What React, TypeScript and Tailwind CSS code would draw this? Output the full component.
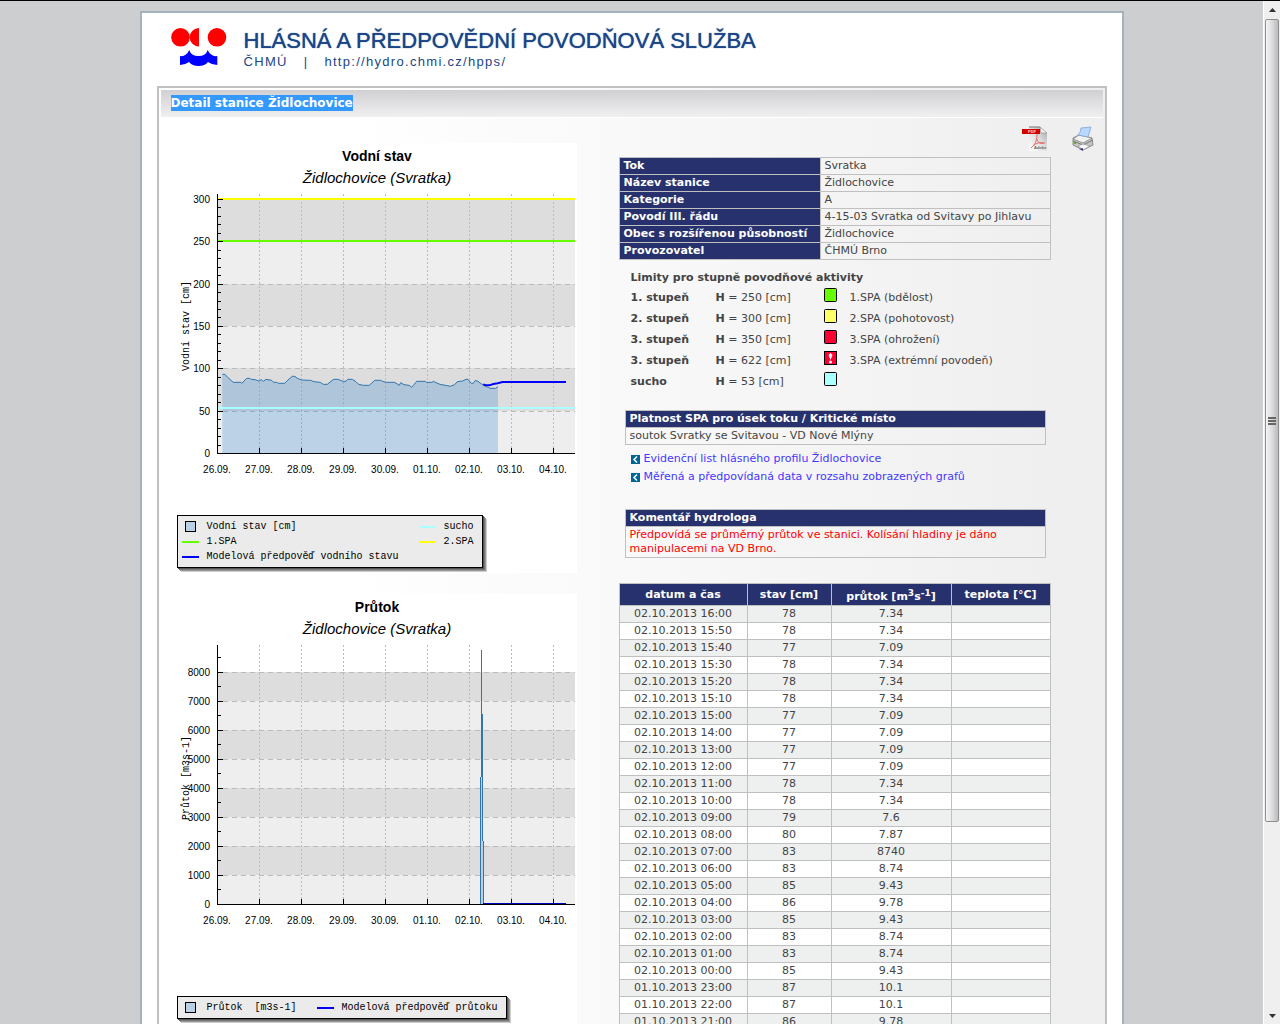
import React from "react";

const stationInfo = [
  ["Tok", "Svratka"],
  ["Název stanice", "Židlochovice"],
  ["Kategorie", "A"],
  ["Povodí III. řádu", "4-15-03 Svratka od Svitavy po Jihlavu"],
  ["Obec s rozšířenou působností", "Židlochovice"],
  ["Provozovatel", "ČHMÚ Brno"],
];

const limits = [
  { name: "1. stupeň", h: "250", color: "#66ff00", label: "1.SPA (bdělost)" },
  { name: "2. stupeň", h: "300", color: "#ffff66", label: "2.SPA (pohotovost)" },
  { name: "3. stupeň", h: "350", color: "#ff0033", label: "3.SPA (ohrožení)" },
  { name: "3. stupeň", h: "622", color: "#ff0033", label: "3.SPA (extrémní povodeň)", extreme: true },
  { name: "sucho", h: "53", color: "#aaffff", label: "" },
];

const measurements = [
  ["02.10.2013 16:00", "78", "7.34"],
  ["02.10.2013 15:50", "78", "7.34"],
  ["02.10.2013 15:40", "77", "7.09"],
  ["02.10.2013 15:30", "78", "7.34"],
  ["02.10.2013 15:20", "78", "7.34"],
  ["02.10.2013 15:10", "78", "7.34"],
  ["02.10.2013 15:00", "77", "7.09"],
  ["02.10.2013 14:00", "77", "7.09"],
  ["02.10.2013 13:00", "77", "7.09"],
  ["02.10.2013 12:00", "77", "7.09"],
  ["02.10.2013 11:00", "78", "7.34"],
  ["02.10.2013 10:00", "78", "7.34"],
  ["02.10.2013 09:00", "79", "7.6"],
  ["02.10.2013 08:00", "80", "7.87"],
  ["02.10.2013 07:00", "83", "8740"],
  ["02.10.2013 06:00", "83", "8.74"],
  ["02.10.2013 05:00", "85", "9.43"],
  ["02.10.2013 04:00", "86", "9.78"],
  ["02.10.2013 03:00", "85", "9.43"],
  ["02.10.2013 02:00", "83", "8.74"],
  ["02.10.2013 01:00", "83", "8.74"],
  ["02.10.2013 00:00", "85", "9.43"],
  ["01.10.2013 23:00", "87", "10.1"],
  ["01.10.2013 22:00", "87", "10.1"],
  ["01.10.2013 21:00", "86", "9.78"],
];

const days = ["26.09.", "27.09.", "28.09.", "29.09.", "30.09.", "01.10.", "02.10.", "03.10.", "04.10."];

const levelLine =
  "187,73 195,73 203,82 212,90 220,97 243,97 246,100 252,93 260,85 270,85 273,88 285,89 297,93 304,89 310,94 318,88 335,91 341,97 350,97 356,100 374,100 384,90 397,79 405,79 412,85 420,88 425,90 452,91 462,95 481,97 490,103 502,103 513,94 521,88 535,88 541,91 550,94 558,94 563,88 577,88 588,95 596,103 610,106 628,106 644,91 662,91 668,94 680,97 704,97 718,106 722,98 732,104 748,106 755,112 762,104 770,94 796,94 800,97 816,97 820,94 828,98 840,103 862,107 871,109 884,104 892,95 908,93 918,88 924,88 934,100 940,100 946,91 954,94 962,100 970,105 976,109 985,112 990,115 1007,115 1014,110";

type Tick = { label: string; y: number };

const levelTicks: Tick[] = [
  { label: "300", y: 56 },
  { label: "250", y: 98 },
  { label: "200", y: 141 },
  { label: "150", y: 183 },
  { label: "100", y: 225 },
  { label: "50", y: 268 },
  { label: "0", y: 310 },
];

const flowTicks: Tick[] = [8000, 7000, 6000, 5000, 4000, 3000, 2000, 1000, 0].map((v) => ({
  label: String(v),
  y: 310 - (v / 1000) * 29,
}));

function ChartFrame(props: {
  title: string;
  axis: string;
  axisStart: number;
  ticks: Tick[];
  minors: number[];
  height: number;
  children: React.ReactNode;
}) {
  const { title, axis, axisStart, ticks, minors, height, children } = props;
  return (
    <svg width="400" height={height} className="block font-['Liberation_Sans']" role="img" aria-label={title}>
      <text x="200" y="18" textAnchor="middle" className="text-[14px] font-bold">{title}</text>
      <text x="200" y="40" textAnchor="middle" className="text-[15px] italic">Židlochovice (Svratka)</text>
      <g shapeRendering="crispEdges">
        {ticks.slice(0, -1).map((t, i) => (
          <rect key={t.y} x="41" y={t.y} width="357" height={ticks[i + 1].y - t.y} fill={i % 2 ? "#eeeeee" : "#dddddd"} />
        ))}
        {ticks.slice(0, -1).map((t) => (
          <line key={t.y} x1="46" x2="398" y1={t.y + 0.5} y2={t.y + 0.5} stroke="#bbbbbb" strokeDasharray="5 4" />
        ))}
        {days.slice(1).map((d, i) => (
          <line key={d} x1={82.5 + i * 42} x2={82.5 + i * 42} y1="51" y2="310" stroke="#bbbbbb" strokeDasharray="2 2" />
        ))}
      </g>
      {children}
      <g shapeRendering="crispEdges" stroke="#000">
        <line x1="40.5" x2="40.5" y1="51" y2="311" />
        <line x1="40" x2="398" y1="310.5" y2="310.5" />
        {ticks.map((t) => (
          <line key={t.y} x1="41" x2="46" y1={t.y + 0.5} y2={t.y + 0.5} />
        ))}
        {minors.map((y) => (
          <line key={y} x1="41" x2="44" y1={y} y2={y} />
        ))}
        {days.slice(1).map((d, i) => (
          <line key={d} x1={82.5 + i * 42} x2={82.5 + i * 42} y1="305" y2="310" />
        ))}
      </g>
      {ticks.map((t) => (
        <text key={t.y} x="33" y={t.y + 4} textAnchor="end" className="text-[10px]">{t.label}</text>
      ))}
      {days.map((d, i) => (
        <text key={d} x={40 + i * 42} y="330" textAnchor="middle" className="text-[10px]">{d}</text>
      ))}
      <text transform={`translate(12 ${axisStart}) rotate(-90)`} className="font-['Liberation_Mono'] text-[10px]">{axis}</text>
    </svg>
  );
}

function LegendItem({ color, box, children }: { color: string; box?: boolean; children: React.ReactNode }) {
  return (
    <span className="flex items-center gap-2 whitespace-pre">
      <span className="flex w-[17px] justify-center">
        {box ? (
          <span className="size-[11px] border border-black" style={{ backgroundColor: color }} />
        ) : (
          <span className="h-[2px] w-full" style={{ backgroundColor: color }} />
        )}
      </span>
      {children}
    </span>
  );
}

const legendBox =
  "border border-black bg-[#ebebeb] font-['Liberation_Mono'] text-[10px] leading-[15px] text-black shadow-[1px_1px_0_#555,2px_2px_0_#777,3px_3px_0_#999,4px_4px_0_#ccc]";

function LevelChart() {
  const minors: number[] = [];
  for (let v = 10; v < 300; v += 10) if (v % 50) minors.push(Math.round(310 - v * 0.847) + 0.5);
  return (
    <figure className="bg-white pb-[5px]">
      <ChartFrame title="Vodní stav" axis="Vodní stav [cm]" axisStart={228} ticks={levelTicks} minors={minors} height={372}>
        <g transform="translate(-17 207) scale(0.3333)" fill="none">
          <polygon points={`187,310 ${levelLine} 1014,310`} fill="#2581d5" fillOpacity="0.25" />
          <polyline points={levelLine} stroke="#3274ac" strokeWidth="3" />
          <polyline points="970,103 975,105 988,106 1000,102 1013,100 1028,96 1218,96" stroke="#0000ff" strokeWidth="6" />
        </g>
        <rect x="41" y="55" width="357" height="2" fill="#ffff00" />
        <rect x="41" y="97" width="357" height="2" fill="#66ff00" />
        <rect x="41" y="264" width="357" height="2" fill="#aaffff" />
      </ChartFrame>
      <figcaption className={`${legendBox} grid w-[306px] grid-cols-[237px_1fr] px-1 py-[3px]`}>
        <LegendItem color="#bad1e5" box>Vodní stav [cm]</LegendItem>
        <LegendItem color="#aaffff">sucho</LegendItem>
        <LegendItem color="#66ff00">1.SPA</LegendItem>
        <LegendItem color="#ffff00">2.SPA</LegendItem>
        <LegendItem color="#0000ff">Modelová předpověď vodního stavu</LegendItem>
      </figcaption>
    </figure>
  );
}

function FlowChart() {
  const minors = [8500, 7500, 6500, 5500, 4500, 3500, 2500, 1500, 500].map((v) => Math.floor(310 - (v / 1000) * 29) + 0.5);
  return (
    <figure className="bg-white pb-[5px]">
      <ChartFrame title="Průtok" axis="Průtok [m3s-1]" axisStart={226} ticks={flowTicks} minors={minors} height={402}>
        <g shapeRendering="crispEdges">
          <rect x="304" y="183" width="2" height="127" fill="#bad1e5" />
          <rect x="303" y="183" width="1" height="127" fill="#3274ac" />
          <rect x="304" y="56" width="1" height="127" fill="#3274ac" />
          <rect x="305" y="120" width="1" height="127" fill="#3274ac" />
          <rect x="306" y="247" width="1" height="63" fill="#3274ac" />
          <rect x="306" y="309" width="83" height="1" fill="#0000bb" />
        </g>
      </ChartFrame>
      <figcaption className={`${legendBox} flex w-[330px] gap-5 px-1 py-[3px]`}>
        <LegendItem color="#bad1e5" box>{"Průtok  [m3s-1]"}</LegendItem>
        <LegendItem color="#0000ff">Modelová předpověď průtoku</LegendItem>
      </figcaption>
    </figure>
  );
}

function Logo() {
  return (
    <svg width="56" height="40" viewBox="0 0 56 40" aria-hidden="true">
      <g fill="#ff0000">
        <circle cx="9.5" cy="10.3" r="9.3" />
        <path d="M28 1A9.3 9.3 0 0 0 28 19.6Z" />
        <circle cx="46" cy="10.3" r="9.3" />
      </g>
      <path
        d="M9 29Q15 30 18.3 23Q20 29 27.5 29Q35 29 36.7 23Q40 30 46.3 29V38Q41 38 37 35Q34 39 27.5 39Q21 39 18 35Q14 38 9 38Z"
        fill="#0000ff"
      />
    </svg>
  );
}

function PdfIcon() {
  return (
    <svg width="25" height="26" viewBox="0 0 25 26" aria-hidden="true">
      <defs>
        <linearGradient id="sheet" x1="1" y1="0" x2="0" y2="1">
          <stop offset="0" stopColor="#a5a5a5" />
          <stop offset="0.45" stopColor="#dcdcdc" />
          <stop offset="1" stopColor="#ffffff" />
        </linearGradient>
      </defs>
      <path d="M7 1H18L25 7V25H7Z" fill="url(#sheet)" />
      <path d="M18 1L25 7L19 7Z" fill="#f2f2f2" stroke="#8a8a8a" strokeWidth="0.6" />
      <path d="M7 1H18" stroke="#777" />
      <rect x="0" y="3" width="18" height="5" fill="#d40000" />
      <text x="6" y="7" className="font-['Liberation_Sans'] text-[4px] font-bold" fill="#ffd5d5">PDF</text>
      <path d="M15 8C15 13 14 18 9 22M15 13C16 17 19 18 23 17M11 20C14 17 18 16 22 17" fill="none" stroke="#e06666" />
      <text x="12" y="23" className="font-['Liberation_Sans'] text-[4px] font-bold" fill="#666">Adobe</text>
    </svg>
  );
}

function PrinterIcon() {
  return (
    <svg width="24" height="26" viewBox="0 0 24 26" aria-hidden="true">
      <path d="M2 12L8 9L21 12L22 19L12 24L2 19Z" fill="#c5c5c5" stroke="#777" strokeWidth="0.8" />
      <path d="M2 13L8 9L21 12L12 17Z" fill="#f1f1f1" stroke="#888" strokeWidth="0.8" />
      <path d="M10 2L20 1L17 11L7 9Q10 6 10 2Z" fill="#b9d8ff" stroke="#7da3d4" strokeWidth="0.8" />
      <path d="M2 15L12 19L22 14" fill="none" stroke="#777" />
      <path d="M7 20L12 18L19 20L12 24Z" fill="#f8f8f8" stroke="#888" strokeWidth="0.6" />
      <path d="M8 23L12 25L12 22Z" fill="#40407a" />
      <rect x="3" y="16" width="2" height="2" fill="#5cb32a" />
    </svg>
  );
}

function LinkMark() {
  return (
    <svg width="9" height="9" viewBox="0 0 9 9" aria-hidden="true">
      <rect width="9" height="9" fill="#006699" />
      <path d="M6 1.5L3 4.5L6 7.5" fill="none" stroke="#fff" strokeWidth="1.5" />
    </svg>
  );
}

function Swatch({ color, extreme }: { color: string; extreme?: boolean }) {
  return (
    <svg width="13" height="14" viewBox="0 0 13 14" className="block" aria-hidden="true">
      <rect x="0.5" y="0.5" width="12" height="13" rx={extreme ? 0 : 1} fill={color} stroke="#000" />
      {extreme && <path d="M6.5 2L8.5 4L6.5 9L4.5 4ZM5 11A1.5 1.5 0 1 1 8 11A1.5 1.5 0 1 1 5 11Z" fill="#fff" />}
    </svg>
  );
}

const headCell = "border border-[#c0c0c0] bg-[#26316d] px-1 text-white";

function NoteTable({ title, children, red }: { title: string; children: React.ReactNode; red?: boolean }) {
  return (
    <table className="ml-[6px] w-[421px] border-collapse">
      <thead>
        <tr>
          <th className={`${headCell} py-px text-left`}>{title}</th>
        </tr>
      </thead>
      <tbody>
        <tr>
          <td className={`border border-[#c0c0c0] px-1 py-px ${red ? "text-[#ff0000]" : ""}`}>{children}</td>
        </tr>
      </tbody>
    </table>
  );
}

function StationDetails() {
  return (
    <div className="grow pt-2 text-[11px] leading-[14px] text-[#444]">
      <div className="mb-[5px] flex justify-end gap-6 pr-2">
        <a href="#pdf" aria-label="PDF"><PdfIcon /></a>
        <a href="#print" aria-label="Tisk"><PrinterIcon /></a>
      </div>

      <table className="w-[432px] border-collapse">
        <tbody>
          {stationInfo.map(([k, v]) => (
            <tr key={k}>
              <th scope="row" className={`${headCell} w-[201px] py-px text-left whitespace-nowrap`}>{k}</th>
              <td className="border border-[#c0c0c0] px-1 py-px whitespace-nowrap">{v}</td>
            </tr>
          ))}
        </tbody>
      </table>

      <h2 className="mt-[11px] ml-3 font-bold">Limity pro stupně povodňové aktivity</h2>
      <table className="mt-[2px] ml-3 border-collapse">
        <tbody>
          {limits.map((l) => (
            <tr key={l.h} className="h-[21px]">
              <th scope="row" className="w-[85px] p-0 text-left">{l.name}</th>
              <td className="w-[108px] p-0"><b>H</b> = {l.h} [cm]</td>
              <td className="w-[26px] p-0 pb-[6px]"><Swatch color={l.color} extreme={l.extreme} /></td>
              <td className="p-0 whitespace-nowrap">{l.label}</td>
            </tr>
          ))}
        </tbody>
      </table>

      <div className="mt-[18px]">
        <NoteTable title="Platnost SPA pro úsek toku / Kritické místo">soutok Svratky se Svitavou - VD Nové Mlýny</NoteTable>
      </div>
      <ul className="mt-[5px] ml-3 leading-[18px]">
        <li className="flex">
          <a href="#evidence" className="flex items-center gap-1 text-[#4338ff]"><LinkMark />Evidenční list hlásného profilu Židlochovice</a>
        </li>
        <li className="flex">
          <a href="#data" className="flex items-center gap-1 text-[#4338ff]"><LinkMark />Měřená a předpovídaná data v rozsahu zobrazených grafů</a>
        </li>
      </ul>
      <div className="mt-[23px]">
        <NoteTable title="Komentář hydrologa" red>
          Předpovídá se průměrný průtok ve stanici. Kolísání hladiny je dáno manipulacemi na VD Brno.
        </NoteTable>
      </div>

      <table className="mt-[25px] w-[432px] table-fixed border-collapse text-center">
        <thead>
          <tr className="h-[22px]">
            <th className={`${headCell} w-[128px]`}>datum a čas</th>
            <th className={`${headCell} w-[84px]`}>stav [cm]</th>
            <th className={`${headCell} w-[120px] pt-[5px] whitespace-nowrap`}>
              průtok [m<sup className="text-[9px]">3</sup>s<sup className="text-[9px]">-1</sup>]
            </th>
            <th className={headCell}>teplota [°C]</th>
          </tr>
        </thead>
        <tbody>
          {measurements.map(([time, level, flow]) => (
            <tr key={time} className="h-[17px] odd:bg-[#eef0f0] even:bg-white">
              <td className="border border-[#c0c0c0] px-1 py-px">{time}</td>
              <td className="border border-[#c0c0c0] px-1 py-px">{level}</td>
              <td className="border border-[#c0c0c0] px-1 py-px">{flow}</td>
              <td className="border border-[#c0c0c0] px-1 py-px" />
            </tr>
          ))}
        </tbody>
      </table>
    </div>
  );
}

function ScrollBar() {
  return (
    <div className="flex w-[17px] shrink-0 flex-col border-l border-white bg-[#efefef]">
      <button aria-label="Nahoru" className="flex h-[18px] items-center justify-center">
        <svg width="7" height="4" aria-hidden="true"><path d="M0 4L3.5 0L7 4Z" fill="#333" /></svg>
      </button>
      <div className="mx-px flex grow-[803] flex-col items-center justify-center gap-px rounded-xs border border-[#8f8f8f] bg-linear-to-r from-[#f5f5f5] via-[#dcdcdf] to-[#b9babd]">
        <span className="h-[2px] w-2 bg-[#666]" />
        <span className="h-[2px] w-2 bg-[#666]" />
        <span className="h-[2px] w-2 bg-[#666]" />
      </div>
      <div className="grow-[187]" />
      <button aria-label="Dolů" className="flex h-[17px] items-center justify-center">
        <svg width="7" height="4" aria-hidden="true"><path d="M0 0L3.5 4L7 0Z" fill="#333" /></svg>
      </button>
    </div>
  );
}

export default function App() {
  return (
    <div className="flex h-screen overflow-hidden border-t border-black bg-[#cdced0] font-['DejaVu_Sans',Verdana,sans-serif]">
      <main className="grow overflow-hidden pt-[10px]">
        <div className="mx-auto max-w-[984px] border-2 border-[#a3b3bd] bg-white px-[15px]">
          <header className="flex h-[73px] gap-[17px] pt-[14px] pl-[14px] font-['Liberation_Sans'] text-[#1c4587]">
            <Logo />
            <div>
              <h1 className="text-[22px] leading-[27px] whitespace-nowrap [text-shadow:0_0_1px_#1c4587]">HLÁSNÁ A PŘEDPOVĚDNÍ POVODŇOVÁ SLUŽBA</h1>
              <p className="flex gap-4 text-[13px] leading-[16px] tracking-widest">
                <span>ČHMÚ</span>
                <span>|</span>
                <a href="#hpps">http://hydro.chmi.cz/hpps/</a>
              </p>
            </div>
          </header>

          <section className="border-2 border-[#c0c0c2] bg-linear-to-r from-white from-20% to-[#efefef] to-95% p-[2px]">
            <div className="flex h-[28px] border-b border-white bg-linear-to-b from-[#d0d0d3] to-[#f0f0f1] pt-[5px] pl-[10px]">
              <h2 className="h-4 bg-[#3399ff] text-[12px] leading-[16px] font-bold text-white">Detail stanice Židlochovice</h2>
            </div>
            <div className="flex gap-[42px] pl-4">
              <div className="flex w-[400px] shrink-0 flex-col gap-[21px] pt-[25px]">
                <LevelChart />
                <FlowChart />
              </div>
              <StationDetails />
            </div>
          </section>
        </div>
      </main>
      <ScrollBar />
    </div>
  );
}
